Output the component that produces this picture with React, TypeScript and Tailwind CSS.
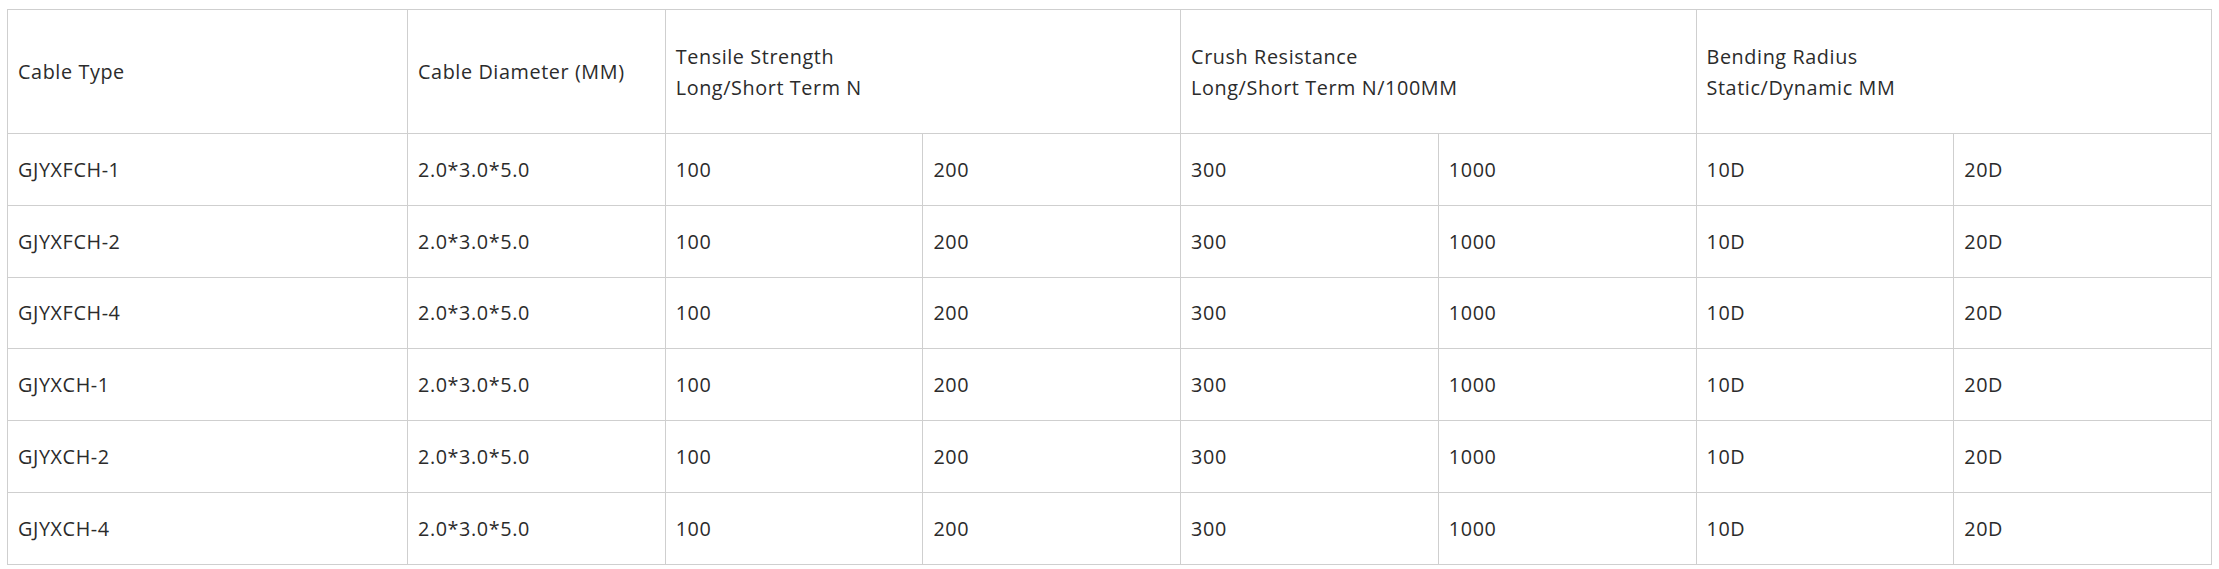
import React from "react";

const rows = [
  "GJYXFCH-1",
  "GJYXFCH-2",
  "GJYXFCH-4",
  "GJYXCH-1",
  "GJYXCH-2",
  "GJYXCH-4",
];

export default function App() {
  const cell = "border border-[#cfcfcf] px-[10px] text-left align-middle font-normal";
  return (
    <div
      className="bg-white px-[7px] pt-[9px] text-[#2b2b2b] text-[19.8px] leading-[31px] tracking-[0.6px]"
      style={{ fontFamily: '"Open Sans", "Noto Sans", sans-serif' }}
    >
      <table className="w-full table-fixed border-collapse">
        <colgroup>
          <col className="w-[400px]" />
          <col />
          <col />
          <col />
          <col />
          <col />
          <col />
          <col />
        </colgroup>
        <thead>
          <tr className="h-[124px]">
            <th className={cell}>Cable Type</th>
            <th className={cell}>Cable Diameter (MM)</th>
            <th className={cell} colSpan={2}>
              Tensile Strength
              <br />
              Long/Short Term N
            </th>
            <th className={cell} colSpan={2}>
              Crush Resistance
              <br />
              Long/Short Term N/100MM
            </th>
            <th className={cell} colSpan={2}>
              Bending Radius
              <br />
              Static/Dynamic MM
            </th>
          </tr>
        </thead>
        <tbody>
          {rows.map((r) => (
            <tr key={r} className="h-[71.8px]">
              <td className={cell}>{r}</td>
              <td className={cell}>2.0*3.0*5.0</td>
              <td className={cell}>100</td>
              <td className={cell}>200</td>
              <td className={cell}>300</td>
              <td className={cell}>1000</td>
              <td className={cell}>10D</td>
              <td className={cell}>20D</td>
            </tr>
          ))}
        </tbody>
      </table>
    </div>
  );
}
